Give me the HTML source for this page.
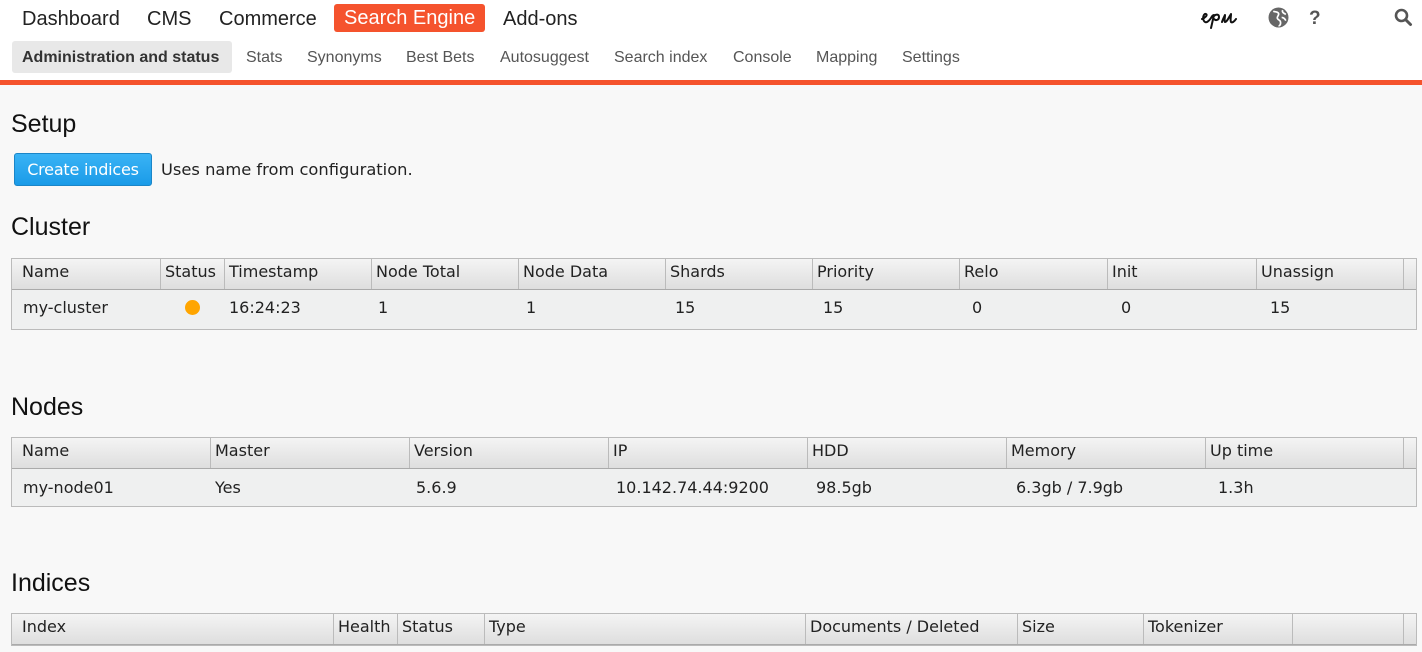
<!DOCTYPE html>
<html><head><style>
*{margin:0;padding:0;box-sizing:border-box}
body{width:1422px;height:652px;overflow:hidden;background:#f8f8f8;font-family:"Liberation Sans",Arial,sans-serif;position:relative}
#top{position:absolute;left:0;top:0;width:1422px;height:80px;background:#fff}
.t{position:absolute;top:7px;font-size:20px;color:#222;line-height:24px}
.se{background:#f5532d;color:#fff;border-radius:3px;padding:0 10px;top:4px;height:28px;line-height:28px}
.s{position:absolute;top:48px;font-size:16px;color:#555;line-height:20px}
.act{background:#e8e8e8;border-radius:3px;color:#333;font-weight:bold;padding:0 10px;top:41px;height:32px;line-height:33px}
#bar{position:absolute;left:0;top:80px;width:1422px;height:5px;background:#f5532d}
h2{position:absolute;left:11px;font-size:25px;font-weight:normal;color:#111;line-height:28px}
.btn{position:absolute;left:14px;top:153px;width:138px;height:33px;background:linear-gradient(#3ab3f5,#1a9be8);border:1px solid #1b86c8;border-radius:3px;color:#fff;font:16px "DejaVu Sans",Verdana,sans-serif;line-height:31px;text-align:center;letter-spacing:-0.2px}
.note{position:absolute;left:161px;top:160px;font:16.3px "DejaVu Sans",Verdana,sans-serif;color:#222}
.tbl{position:absolute;left:11px;width:1406px;border:1px solid #bbb;background:#eff0f0;font:16px "DejaVu Sans",Verdana,sans-serif;color:#222}
.hd{position:absolute;left:0;top:0;width:100%;height:31px;background:linear-gradient(#f4f4f4,#dedede);border-bottom:1px solid #aaa}
.c{position:absolute;top:0;height:30px;line-height:26px;border-left:1px solid #bbb;padding-left:4px;white-space:nowrap;overflow:hidden}
.d{position:absolute;line-height:20px;white-space:nowrap}
</style></head><body>
<div id="top">
<div class="t" style="left:22px">Dashboard</div>
<div class="t" style="left:147px">CMS</div>
<div class="t" style="left:219px">Commerce</div>
<div class="t se" style="left:334px">Search Engine</div>
<div class="t" style="left:503px">Add-ons</div>
<svg style="position:absolute;left:1200px;top:7px" width="46" height="22" viewBox="0 0 46 22"><path d="M2 12c3-1 6-4 4-5s-4 4-2 7 5 0 7-3c1-2 2-3 3-3-1 4-2 9-3 13M14 9c2-2 5-2 5 1s-3 4-5 2M22 15c1-3 2-5 3-7 0 3-1 6 0 7 2 0 4-5 6-8 0 3-1 6 0 8 1 1 3 0 5-3" stroke="#111" stroke-width="2" fill="none" stroke-linecap="round" stroke-linejoin="round"/></svg>
<svg style="position:absolute;left:1268px;top:7px" width="21" height="21" viewBox="0 0 20 20"><circle cx="10" cy="10" r="9.5" fill="#666"/><path d="M5 4c2 1 4 0 5 2s-2 3-1 5 3 1 3 4-2 3-2 3M14 3c-1 2 1 3 3 4M13 10c2 0 3 1 4 3" stroke="#fff" stroke-width="1.6" fill="none"/></svg>
<div class="t" style="left:1309px;font-weight:bold;color:#555;font-size:19px">?</div>
<svg style="position:absolute;left:1394px;top:8px" width="19" height="19" viewBox="0 0 19 19"><circle cx="7.5" cy="7.5" r="5.5" stroke="#555" stroke-width="2.6" fill="none"/><path d="M11.5 11.5l5 5" stroke="#555" stroke-width="3" stroke-linecap="round"/></svg>
<div class="s act" style="left:12px;padding:0 10px 0 10px;width:220px">Administration and status</div>
<div class="s" style="left:246px">Stats</div>
<div class="s" style="left:307px">Synonyms</div>
<div class="s" style="left:406px">Best Bets</div>
<div class="s" style="left:500px">Autosuggest</div>
<div class="s" style="left:614px">Search index</div>
<div class="s" style="left:733px">Console</div>
<div class="s" style="left:816px">Mapping</div>
<div class="s" style="left:902px">Settings</div>
</div>
<div id="bar"></div>
<h2 style="top:110px">Setup</h2>
<div class="btn">Create indices</div>
<div class="note">Uses name from configuration.</div>
<h2 style="top:213px">Cluster</h2>
<div class="tbl" style="top:258px;height:72px">
<div class="hd">
<div class="c" style="left:-1px;border:0;padding-left:11px">Name</div>
<div class="c" style="left:148px">Status</div>
<div class="c" style="left:212px">Timestamp</div>
<div class="c" style="left:359px">Node Total</div>
<div class="c" style="left:506px">Node Data</div>
<div class="c" style="left:653px">Shards</div>
<div class="c" style="left:800px">Priority</div>
<div class="c" style="left:947px">Relo</div>
<div class="c" style="left:1095px">Init</div>
<div class="c" style="left:1244px">Unassign</div>
<div class="c" style="left:1391px;width:14px"></div>
</div>
<div class="d" style="left:11px;top:39px">my-cluster</div>
<div style="position:absolute;left:173px;top:41px;width:15px;height:15px;border-radius:50%;background:#ffa500"></div>
<div class="d" style="left:217px;top:39px">16:24:23</div>
<div class="d" style="left:366px;top:39px">1</div>
<div class="d" style="left:514px;top:39px">1</div>
<div class="d" style="left:663px;top:39px">15</div>
<div class="d" style="left:811px;top:39px">15</div>
<div class="d" style="left:960px;top:39px">0</div>
<div class="d" style="left:1109px;top:39px">0</div>
<div class="d" style="left:1258px;top:39px">15</div>
</div>
<h2 style="top:393px">Nodes</h2>
<div class="tbl" style="top:437px;height:70px">
<div class="hd">
<div class="c" style="left:-1px;border:0;padding-left:11px">Name</div>
<div class="c" style="left:198px">Master</div>
<div class="c" style="left:397px">Version</div>
<div class="c" style="left:596px">IP</div>
<div class="c" style="left:795px">HDD</div>
<div class="c" style="left:994px">Memory</div>
<div class="c" style="left:1193px">Up time</div>
<div class="c" style="left:1391px;width:14px"></div>
</div>
<div class="d" style="left:11px;top:40px">my-node01</div>
<div class="d" style="left:203px;top:40px">Yes</div>
<div class="d" style="left:404px;top:40px">5.6.9</div>
<div class="d" style="left:604px;top:40px">10.142.74.44:9200</div>
<div class="d" style="left:804px;top:40px">98.5gb</div>
<div class="d" style="left:1004px;top:40px">6.3gb / 7.9gb</div>
<div class="d" style="left:1206px;top:40px">1.3h</div>
</div>
<h2 style="top:569px">Indices</h2>
<div class="tbl" style="top:613px;height:33px">
<div class="hd">
<div class="c" style="left:-1px;border:0;padding-left:11px">Index</div>
<div class="c" style="left:321px">Health</div>
<div class="c" style="left:385px">Status</div>
<div class="c" style="left:472px">Type</div>
<div class="c" style="left:793px">Documents / Deleted</div>
<div class="c" style="left:1005px">Size</div>
<div class="c" style="left:1131px">Tokenizer</div>
<div class="c" style="left:1280px"></div>
<div class="c" style="left:1391px;width:14px"></div>
</div>
</div>
</body></html>
